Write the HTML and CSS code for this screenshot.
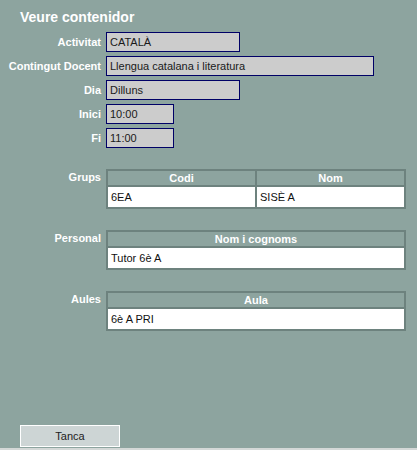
FILE: index.html
```html
<!DOCTYPE html>
<html lang="ca">
<head>
  <meta charset="UTF-8" />
  <meta name="viewport" content="width=device-width, initial-scale=1" />
  <title>Veure contenidor</title>
  <link rel="stylesheet" href="styles.css">
</head>
<body>
  <div class="page">
    <h1>Veure contenidor</h1>

    <div class="form">
      <label>Activitat</label>
      <span class="field w-md">CATALÀ</span>

      <label>Contingut Docent</label>
      <span class="field w-lg">Llengua catalana i literatura</span>

      <label>Dia</label>
      <span class="field w-md">Dilluns</span>

      <label>Inici</label>
      <span class="field w-sm">10:00</span>

      <label>Fi</label>
      <span class="field w-sm">11:00</span>
    </div>

    <div class="section">
      <div class="label">Grups</div>
      <table>
        <thead>
          <tr><th>Codi</th><th>Nom</th></tr>
        </thead>
        <tbody>
          <tr><td>6EA</td><td>SISÈ A</td></tr>
        </tbody>
      </table>
    </div>

    <div class="section">
      <div class="label">Personal</div>
      <table>
        <thead>
          <tr><th>Nom i cognoms</th></tr>
        </thead>
        <tbody>
          <tr><td>Tutor 6è A</td></tr>
        </tbody>
      </table>
    </div>

    <div class="section">
      <div class="label">Aules</div>
      <table>
        <thead>
          <tr><th>Aula</th></tr>
        </thead>
        <tbody>
          <tr><td>6è A PRI</td></tr>
        </tbody>
      </table>
    </div>

    <div class="actions">
      <button type="button">Tanca</button>
    </div>
  </div>
</body>
</html>
```

FILE: styles.css
```css
body {
  margin: 0;
  background: #8da49f;
  font-family: "Liberation Sans", Arial, sans-serif;
  color: #fff;
}
.page {
  height: 448px;
  border-bottom: 2px solid #d4d8d7;
  display: flex;
  flex-direction: column;
}
h1 {
  margin: 0 0 7px;
  padding: 9px 20px 0;
  font-size: 14px;
  line-height: 16px;
  font-weight: bold;
}
.form {
  display: grid;
  grid-template-columns: 101px auto;
  column-gap: 5px;
  row-gap: 4px;
  align-items: center;
  justify-items: start;
}
.form label {
  justify-self: end;
  font-size: 11px;
  font-weight: bold;
}
.field {
  box-sizing: border-box;
  height: 20px;
  line-height: 18px;
  padding: 0 3px;
  background: #cccccc;
  border: 1px solid #000066;
  color: #1a1a1a;
  font-size: 11px;
  white-space: nowrap;
}
.w-sm { width: 68px; }
.w-md { width: 134px; }
.w-lg { width: 268px; }

.section {
  display: grid;
  grid-template-columns: 101px 300px;
  column-gap: 5px;
  margin-top: 21px;
}
.section .label {
  text-align: right;
  font-size: 11px;
  font-weight: bold;
  line-height: 16px;
}
table {
  width: 300px;
  border-collapse: collapse;
  table-layout: fixed;
  font-size: 11px;
}
th, td {
  border: 2px solid #6d827e;
  padding: 0 3px;
}
th {
  line-height: 14px;
  font-weight: bold;
  color: #fff;
  text-align: center;
}
td {
  background: #fff;
  color: #111;
  line-height: 20px;
  text-align: left;
}
.actions {
  margin-top: auto;
  padding: 0 0 1px 20px;
}
.actions button {
  width: 100px;
  height: 22px;
  padding: 0;
  background: #cdd5d5;
  border: 1px solid #fff;
  color: #222;
  font-family: "Liberation Sans", Arial, sans-serif;
  font-size: 11px;
}
```
